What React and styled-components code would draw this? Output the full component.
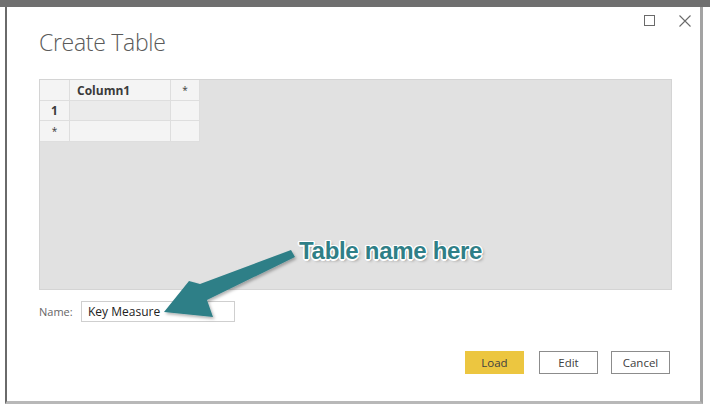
import React from 'react'
import styled, { createGlobalStyle } from 'styled-components'

const GlobalStyle = createGlobalStyle`
  html, body {
    margin: 0;
    padding: 0;
    background: #ffffff;
  }
  * {
    box-sizing: border-box;
  }
`;

const Screen = styled.div`
  position: relative;
  width: 710px;
  height: 411px;
  background: #ffffff;
  border-top: 7px solid #6f6f6f;
  overflow: hidden;
  font-family: "Open Sans", "Noto Sans", sans-serif;
`;

const Dialog = styled.div`
  margin-left: 5px;
  width: 698px;
  height: 397px;
  background: #ffffff;
  border-left: 2px solid #6a6a6a;
  border-right: 3px solid #a3a3a3;
  border-bottom: 3px solid #b8b8b8;
  display: flex;
  flex-direction: column;
  padding: 0 28px 0 32px;
`;

const TopBar = styled.div`
  height: 20px;
  display: flex;
  justify-content: flex-end;
  align-items: flex-end;
  gap: 22px;
  margin-right: -19px;
`;

const WinButton = styled.button`
  border: none;
  background: none;
  padding: 0;
  width: 13px;
  height: 13px;
  display: flex;
  align-items: center;
  justify-content: center;
`;

const Title = styled.h1`
  margin: 0;
  font-size: 23px;
  line-height: 30px;
  font-weight: 300;
  color: #5a5a5a;
  letter-spacing: -0.3px;
  height: 52px;
`;

const GridArea = styled.div`
  height: 211px;
  background: #e1e1e1;
  border: 1px solid #d4d4d4;
`;

const Table = styled.div`
  display: grid;
  grid-template-columns: 29px 100px 28px;
  grid-template-rows: 20px 19px 20px;
  width: 160px;
  background: #dedede;
  gap: 1px;
  border-right: 1px solid #dedede;
  border-bottom: 1px solid #dedede;
`;

const Cell = styled.div`
  background: ${p => (p.$selected ? '#ebebeb' : '#f4f4f4')};
  font-size: ${p => (p.$small ? '10px' : '12px')};
  font-weight: ${p => (p.$bold ? 700 : 400)};
  color: #3a3a3a;
  display: flex;
  align-items: center;
  justify-content: ${p => (p.$center ? 'center' : 'flex-start')};
  padding-left: ${p => (p.$center ? '0' : '7px')};
`;

const NameRow = styled.div`
  display: flex;
  align-items: center;
  margin-top: 11px;
`;

const Label = styled.span`
  width: 42px;
  font-size: 11px;
  color: #666666;
`;

const NameInput = styled.div`
  width: 154px;
  height: 21px;
  border: 1px solid #cfcfcf;
  padding-left: 6px;
  display: flex;
  align-items: center;
  font-size: 12px;
  color: #222222;
`;

const Buttons = styled.div`
  display: flex;
  justify-content: flex-end;
  margin-top: 29px;
  margin-right: 2px;
`;

const Button = styled.button`
  width: 59px;
  height: 23px;
  margin-left: ${p => p.$gap || 0}px;
  border: 1px solid ${p => (p.$primary ? '#ecc640' : '#8c8c8c')};
  background: ${p => (p.$primary ? '#ecc640' : '#ffffff')};
  font-family: "Open Sans", "Noto Sans", sans-serif;
  font-size: 11.5px;
  color: #404040;
  padding: 0;
`;

const Overlay = styled.svg`
  position: absolute;
  left: 0;
  top: -7px;
  pointer-events: none;
`;

const Callout = styled.div`
  position: absolute;
  left: 299px;
  top: 230px;
  font-family: "Liberation Sans", Arial, sans-serif;
  font-weight: 700;
  font-size: 24px;
  letter-spacing: -0.3px;
  color: #2f7f87;
  text-shadow:
    -1px -1px 0 #fff, 1px -1px 0 #fff, -1px 1px 0 #fff, 1px 1px 0 #fff,
    0 -1.5px 0 #fff, 0 1.5px 0 #fff, -1.5px 0 0 #fff, 1.5px 0 0 #fff,
    2px 2px 3px rgba(0, 0, 0, 0.35);
`;

const App = () => {
  return (
    <>
      <GlobalStyle />
      <Screen>
        <Dialog>
          <TopBar>
            <WinButton aria-label="Maximize">
              <svg width="11" height="11" viewBox="0 0 11 11">
                <rect x="0.5" y="0.5" width="10" height="10" fill="none" stroke="#6a6a6a" strokeWidth="1" />
              </svg>
            </WinButton>
            <WinButton aria-label="Close">
              <svg width="12" height="12" viewBox="0 0 12 12">
                <path d="M0.5 0.5 L11.5 11.5 M11.5 0.5 L0.5 11.5" stroke="#6a6a6a" strokeWidth="1.1" />
              </svg>
            </WinButton>
          </TopBar>
          <Title>Create Table</Title>
          <GridArea>
            <Table>
              <Cell />
              <Cell $bold>Column1</Cell>
              <Cell $center $small>*</Cell>
              <Cell $center $bold>1</Cell>
              <Cell $selected />
              <Cell />
              <Cell $center $small>*</Cell>
              <Cell />
              <Cell />
            </Table>
          </GridArea>
          <NameRow>
            <Label>Name:</Label>
            <NameInput>Key Measure</NameInput>
          </NameRow>
          <Buttons>
            <Button $primary>Load</Button>
            <Button $gap={15}>Edit</Button>
            <Button $gap={13}>Cancel</Button>
          </Buttons>
        </Dialog>
        <Overlay width="710" height="411" viewBox="0 0 710 411">
          <defs>
            <filter id="shadow" x="-10%" y="-10%" width="130%" height="130%">
              <feDropShadow dx="1.5" dy="2" stdDeviation="1.5" floodColor="#000" floodOpacity="0.3" />
            </filter>
          </defs>
          <polygon
            points="291,250 200,284 189,281 164,312 213,317 207,300 295,257"
            fill="#2f7f87"
            filter="url(#shadow)"
          />
        </Overlay>
        <Callout>Table name here</Callout>
      </Screen>
    </>
  )
}

export default App
